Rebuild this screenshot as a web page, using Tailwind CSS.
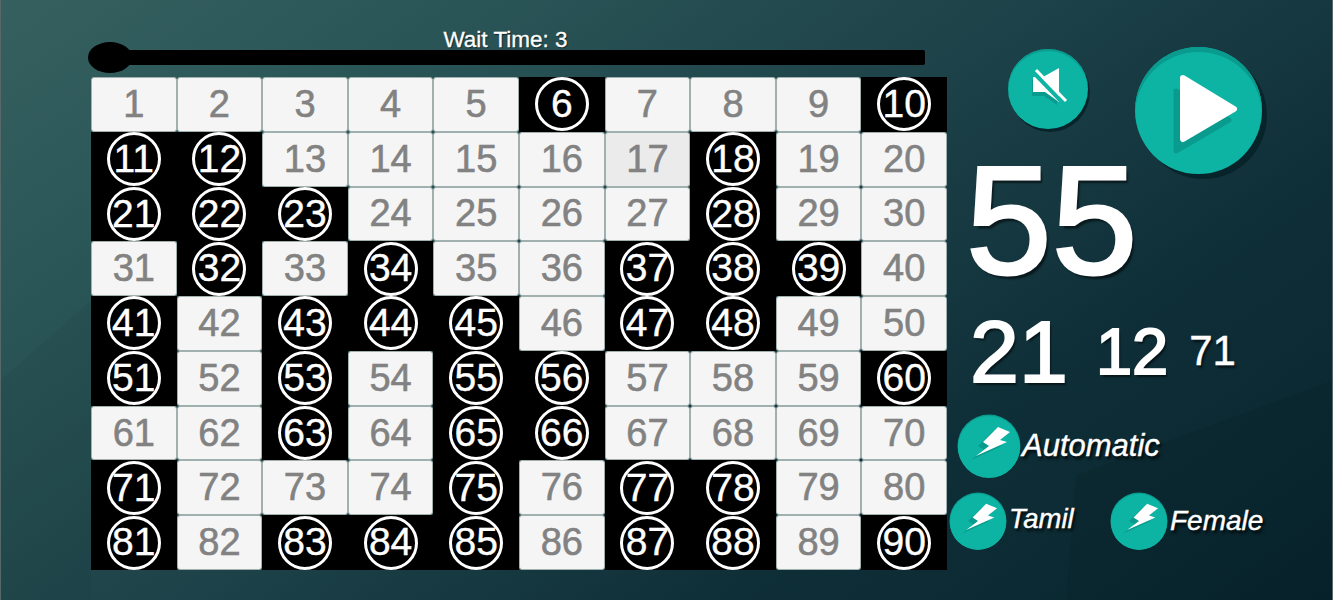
<!DOCTYPE html>
<html lang="en">
  <head>
    <meta charset="UTF-8" />
    <title>Tambola</title>
    <script src="https://cdn.jsdelivr.net/npm/@tailwindcss/browser@4"></script>
  </head>
  <body class="m-0 w-[1333px] h-[600px] overflow-hidden font-['Liberation_Sans',Arial,sans-serif]">
    <div class="relative flex w-[1333px] h-[600px] overflow-hidden border-x border-[#56686a] bg-[linear-gradient(145deg,#36605f_0%,#2a5557_22%,#1c4047_50%,#0f2f38_72%,#07242c_100%)]">
      <!-- faint polygons in the backdrop -->
      <svg class="absolute inset-0" width="1333" height="600" viewBox="0 0 1333 600">
        <polygon points="1075,475 1333,380 1333,600 1065,600" fill="#000" opacity="0.06" />
        <polygon points="0,380 90,300 90,600 0,600" fill="#000" opacity="0.04" />
      </svg>

      <!-- left: slider and board -->
      <div class="relative flex flex-col w-[946px] pl-[89px] shrink-0">
        <div class="relative h-[77px] w-[857px]">
          <div class="pt-[28px] text-center text-[22.5px] leading-[23px] text-white [-webkit-text-stroke:0.3px_white] [text-shadow:1px_1px_1px_rgba(0,0,0,0.6)] w-[831px]">Wait Time: 3</div>
          <div class="absolute left-[20px] top-[50px] w-[815px] h-[15px] rounded-[2px] bg-black"></div>
          <div class="absolute left-[-2px] top-[42px] w-[44px] h-[31px] rounded-[50%] bg-black"></div>
        </div>
        <div id="board" class="grid grid-cols-10 grid-rows-9 ml-[1px] w-[856px] h-[493px]"></div>
      </div>

      <!-- right: controls and called numbers -->
      <div class="relative flex flex-col w-[385px]">
        <div class="flex items-start h-[132px]">
          <button class="mt-[49px] ml-[61px] flex h-[80px] w-[80px] items-center justify-center rounded-full bg-[#0db4a3] shadow-[2px_3px_0_#08242b,inset_0_2px_0_#0a9b8f]">
            <svg width="80" height="80" viewBox="0 0 80 80">
              <polygon points="24,31 34,31 49,23 49,56 36,47 24,47" fill="#0a9b8f" />
              <polygon points="25,28 35,28 51,19 51,53 37,43 25,43" fill="#fff" />
              <line x1="25" y1="23" x2="55" y2="54" stroke="#0db4a3" stroke-width="4" />
              <line x1="28" y1="21" x2="58" y2="52" stroke="#fff" stroke-width="3" />
            </svg>
          </button>
          <button class="mt-[47px] ml-[47px] flex h-[127px] w-[127px] items-center justify-center rounded-full bg-[#0db4a3] shadow-[5px_5px_0_#08242b,inset_0_5px_0_#0a9b8f]">
            <svg width="127" height="127" viewBox="0 0 127 127">
              <polygon points="41,44 94,73 41,104" fill="#0a9b8f" stroke="#0a9b8f" stroke-width="5" stroke-linejoin="round" />
              <polygon points="48,31 99,62 48,92" fill="#fff" stroke="#fff" stroke-width="6" stroke-linejoin="round" />
            </svg>
          </button>
        </div>
        <div class="ml-[19px] mt-[14px] h-[150px] text-[154px] leading-[150px] text-white [-webkit-text-stroke:3px_white] [text-shadow:3px_4px_2px_rgba(0,0,0,0.55)]">55</div>
        <div class="flex items-baseline ml-[23px] mt-[16px] h-[80px] text-white [-webkit-text-stroke:2px_white] [text-shadow:2px_3px_2px_rgba(0,0,0,0.55)]">
          <span class="text-[88px] leading-[80px]">21</span>
          <span class="ml-[28px] text-[65px] leading-[80px] relative top-[-8px]">12</span>
          <span class="ml-[21px] text-[42px] leading-[80px] relative top-[-17px] [-webkit-text-stroke:0.4px_white]">71</span>
        </div>
        <div class="flex items-center ml-[10px] mt-[22px] h-[64px]">
          <svg class="shrink-0" width="64" height="64" viewBox="0 0 64 64"><circle cx="33" cy="33" r="31" fill="#08242b" /><circle cx="32" cy="32" r="31.5" fill="#0a9b8f" /><circle cx="32" cy="33" r="31" fill="#0db4a3" /><polygon points="36,17 48,22 38,30 45,32 14,46 27,36 21,32" fill="#0a9b8f" /><polygon points="41,13 53,18 43,26 50,28 19,42 32,32 26,28" fill="#fff" /></svg>
          <span class="ml-[1px] mt-[-1px] text-[31px] italic leading-[34px] text-white [-webkit-text-stroke:0.4px_white] [text-shadow:2px_3px_3px_rgba(0,0,0,0.85)]">Automatic</span>
        </div>
        <div class="flex items-center ml-[2px] mt-[14px] h-[58px]">
          <svg class="shrink-0" width="58" height="58" viewBox="0 0 64 64"><circle cx="33" cy="33" r="31" fill="#08242b" /><circle cx="32" cy="32" r="31.5" fill="#0a9b8f" /><circle cx="32" cy="33" r="31" fill="#0db4a3" /><polygon points="36,17 48,22 38,30 45,32 14,46 27,36 21,32" fill="#0a9b8f" /><polygon points="41,13 53,18 43,26 50,28 19,42 32,32 26,28" fill="#fff" /></svg>
          <span class="ml-[2px] mt-[-4px] w-[101px] text-[27.5px] italic leading-[32px] text-white [-webkit-text-stroke:0.4px_white] [text-shadow:2px_3px_3px_rgba(0,0,0,0.85)]">Tamil</span>
          <svg class="shrink-0" width="58" height="58" viewBox="0 0 64 64"><circle cx="33" cy="33" r="31" fill="#08242b" /><circle cx="32" cy="32" r="31.5" fill="#0a9b8f" /><circle cx="32" cy="33" r="31" fill="#0db4a3" /><polygon points="36,17 48,22 38,30 45,32 14,46 27,36 21,32" fill="#0a9b8f" /><polygon points="41,13 53,18 43,26 50,28 19,42 32,32 26,28" fill="#fff" /></svg>
          <span class="ml-[2px] text-[28px] italic leading-[32px] text-white [-webkit-text-stroke:0.4px_white] [text-shadow:2px_3px_3px_rgba(0,0,0,0.85)]">Female</span>
        </div>
      </div>
    </div>

    <script>
      const called = [6,10,11,12,18,21,22,23,28,32,34,37,38,39,41,43,44,45,47,48,51,53,55,56,60,63,65,66,71,75,77,78,81,83,84,85,87,88,90];
      const board = document.getElementById("board");
      let html = "";
      for (let n = 1; n <= 90; n++) {
        if (called.includes(n)) {
          html += `<div class="relative flex items-center justify-center bg-black text-[39px] text-white [-webkit-text-stroke:0.4px_white]">
            <span class="flex h-[54px] w-[54px] items-center justify-center rounded-full border-[3px] border-white">${n}</span></div>`;
        } else if (n === 17) {
          html += `<div class="flex items-center justify-center rounded-[3px] border border-[#9fb0ae] bg-[#ebebeb] text-[38px] text-[#828282] [-webkit-text-stroke:0.6px_#828282]">${n}</div>`;
        } else {
          html += `<div class="flex items-center justify-center rounded-[3px] border border-[#9fb0ae] bg-[#f5f5f5] text-[38px] text-[#828282] [-webkit-text-stroke:0.6px_#828282]">${n}</div>`;
        }
      }
      board.innerHTML = html;
    </script>
  </body>
</html>
